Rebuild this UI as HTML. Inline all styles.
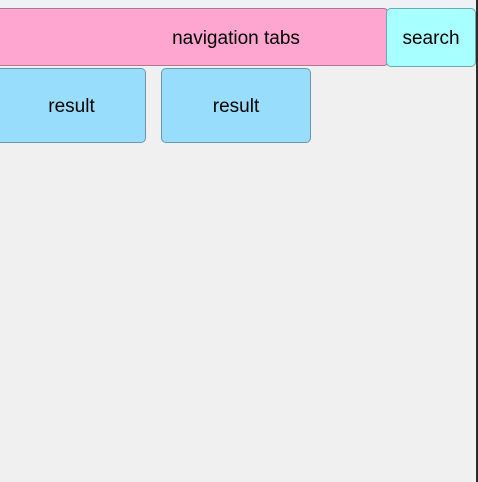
<!DOCTYPE html>
<html><head><style>
html,body{margin:0;padding:0;width:478px;height:482px;overflow:hidden;background:#f0f0f0;font-family:"Liberation Sans",sans-serif;}
.top{position:absolute;left:0;top:0;width:478px;height:8px;background:#eef1f5;}
.edge{position:absolute;left:476px;top:0;width:2px;height:482px;background:#2b2b2b;}
.nav{position:absolute;left:-6px;top:8px;width:394px;height:58px;background:#ffa6d0;border:1px solid #b07890;border-radius:4px;box-sizing:border-box;display:flex;align-items:center;justify-content:center;font-size:19px;color:#000;padding-left:90px;padding-top:3px;}
.search{position:absolute;left:386px;top:8px;width:90px;height:59px;background:#a8ffff;border:1px solid #6fa8b0;border-radius:5px;box-sizing:border-box;display:flex;align-items:center;justify-content:center;font-size:19px;padding-top:3px;}
.res{position:absolute;top:68px;height:75px;background:#99ddfd;border:1px solid #6a98b0;border-radius:5px;box-sizing:border-box;display:flex;align-items:center;justify-content:center;font-size:19px;padding-top:2px;}
</style></head><body>
<div class="top"></div>
<div class="nav">navigation tabs</div>
<div class="search">search</div>
<div class="res" style="left:-6px;width:152px;padding-left:3px">result</div>
<div class="res" style="left:161px;width:150px">result</div>
<div class="edge"></div>
</body></html>
